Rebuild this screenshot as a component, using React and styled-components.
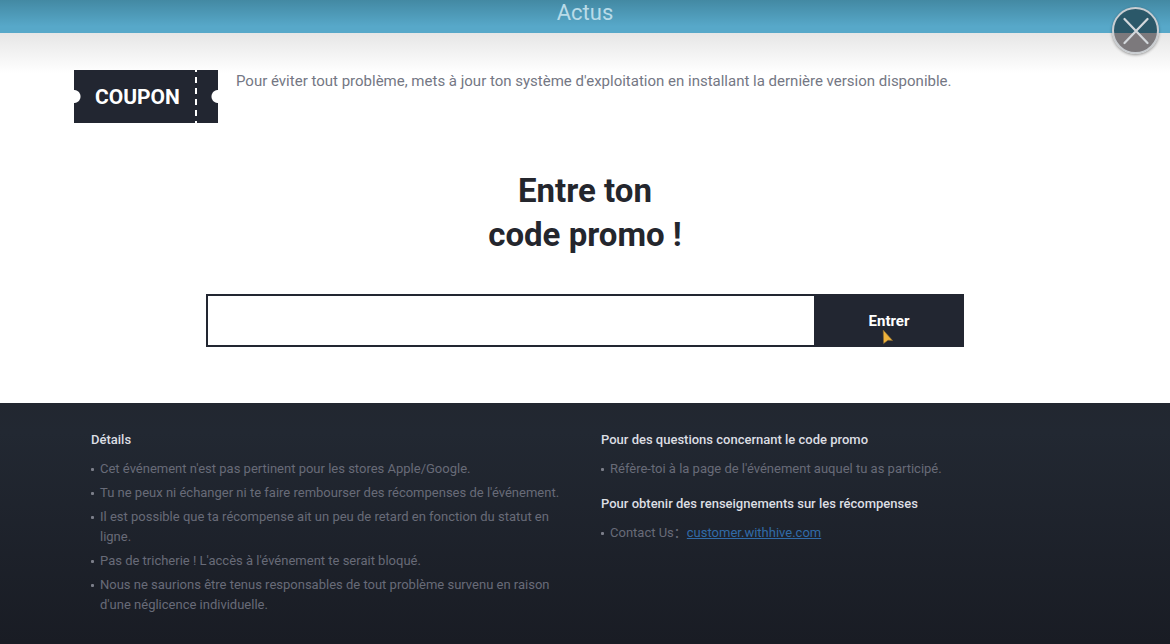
import styled, { createGlobalStyle } from "styled-components";

const details = [
    "Cet événement n'est pas pertinent pour les stores Apple/Google.",
    "Tu ne peux ni échanger ni te faire rembourser des récompenses de l'événement.",
    "Il est possible que ta récompense ait un peu de retard en fonction du statut en ligne.",
    "Pas de tricherie ! L'accès à l'événement te serait bloqué.",
    "Nous ne saurions être tenus responsables de tout problème survenu en raison d'une néglicence individuelle.",
];

export default function App() {

    return (
        <Page>
            <GlobalStyle />
            <TopBar>
                <Title>Actus</Title>
                <CloseButton type="button" aria-label="Fermer">
                    <svg width="26" height="28" viewBox="0 0 26 28" stroke="#d3d8dc" strokeWidth="2.2" strokeLinecap="round">
                        <path d="M1.5 2 L24.5 26 M24.5 2 L1.5 26" />
                    </svg>
                </CloseButton>
            </TopBar>
            <Main>
                <Intro>
                    <Ticket>
                        <TicketLabel>COUPON</TicketLabel>
                        <svg width="2" height="53" viewBox="0 0 2 53" stroke="#fff" strokeWidth="2">
                            <path d="M1 0 V53" strokeDasharray="6 5" strokeDashoffset="4" />
                        </svg>
                    </Ticket>
                    <p>Pour éviter tout problème, mets à jour ton système d'exploitation en installant la dernière version disponible.</p>
                </Intro>
                <Heading>Entre ton<br />code promo !</Heading>
                <CodeForm onSubmit={(e) => e.preventDefault()}>
                    <CodeInput type="text" aria-label="Code promo" />
                    <SubmitButton type="submit">
                        Entrer
                        <Pointer width="12" height="16" viewBox="0 0 12 16" aria-hidden="true">
                            <path d="M1.2 1 L10.6 11.6 L6 11.2 L1.6 14.6 Z" fill="#eeb23c" stroke="#8a6a30" strokeWidth="0.6" />
                        </Pointer>
                    </SubmitButton>
                </CodeForm>
            </Main>
            <Footer>
                <section>
                    <FooterTitle>Détails</FooterTitle>
                    <List>
                        {details.map((text) => <li key={text}>{text}</li>)}
                    </List>
                </section>
                <section>
                    <FooterTitle>Pour des questions concernant le code promo</FooterTitle>
                    <List>
                        <li>Réfère-toi à la page de l'événement auquel tu as participé.</li>
                    </List>
                    <FooterTitle>Pour obtenir des renseignements sur les récompenses</FooterTitle>
                    <List>
                        <li>Contact Us：<a href="https://customer.withhive.com">customer.withhive.com</a></li>
                    </List>
                </section>
            </Footer>
        </Page>
    )
}

const GlobalStyle = createGlobalStyle`
    * {
        box-sizing: border-box;
    }
    body {
        margin: 0;
        background: #fff;
        font-family: Roboto, "Noto Sans CJK SC", sans-serif;
    }
    h1, h2, h3, p, ul {
        margin: 0;
        padding: 0;
    }
`;

const Page = styled.div`
    min-height: 100vh;
    display: flex;
    flex-direction: column;
`;

const TopBar = styled.header`
    position: relative;
    height: 33px;
    display: flex;
    justify-content: center;
    background: linear-gradient(#4389a3, #57a8c9 80%);
`;

const Title = styled.h1`
    font-size: 22px;
    font-weight: 400;
    line-height: 26px;
    color: #b9dbe8;
`;

const CloseButton = styled.button`
    position: absolute;
    top: 7px;
    right: 11px;
    width: 47px;
    height: 47px;
    display: flex;
    align-items: center;
    justify-content: center;
    padding: 0;
    border: 2px solid #c9cdd1;
    border-radius: 50%;
    background: linear-gradient(#2b5869 24px, #7c797c 24px);
    box-shadow: 0 1px 3px rgba(0, 0, 0, 0.4);
    cursor: pointer;
`;

const Main = styled.main`
    padding: 37px 74px 56px;
    background: linear-gradient(#e6e6e6, #fff 40px);
`;

const Intro = styled.div`
    display: flex;
    gap: 18px;
    font-size: 15px;
    line-height: 22px;
    color: #747784;
`;

const Ticket = styled.div`
    flex: none;
    width: 144px;
    height: 53px;
    display: flex;
    align-items: center;
    justify-content: space-between;
    padding: 0 21px;
    background: radial-gradient(circle at 0 50%, #fff 6px, transparent 7px),
        radial-gradient(circle at 100% 50%, #fff 6px, transparent 7px),
        #222631;
`;

const TicketLabel = styled.strong`
    font-size: 21px;
    font-weight: 700;
    color: #fff;
`;

const Heading = styled.h2`
    margin-top: 46px;
    font-size: 33px;
    font-weight: 700;
    line-height: 44px;
    text-align: center;
    color: #24262d;
`;

const CodeForm = styled.form`
    display: flex;
    height: 53px;
    margin: 37px 132px 0;
`;

const CodeInput = styled.input`
    flex: 1;
    min-width: 0;
    padding: 0 16px;
    border: 2px solid #222631;
    border-right: 0;
    border-radius: 0;
    outline: 0;
    background: #fff;
    font: 16px Roboto, sans-serif;
`;

const SubmitButton = styled.button`
    position: relative;
    width: 150px;
    padding: 0;
    border: 0;
    background: #222631;
    color: #fff;
    font: 700 15px Roboto, sans-serif;
    cursor: pointer;
`;

const Pointer = styled.svg`
    position: absolute;
    left: 68px;
    top: 35px;
`;

const Footer = styled.footer`
    flex: 1;
    display: grid;
    grid-template-columns: 1fr 1fr;
    gap: 32px;
    padding: 27px 91px;
    background: linear-gradient(#222730, #222832 12%, #191c24);
    font-size: 13px;
    line-height: 20px;
`;

const FooterTitle = styled.h3`
    font-size: 13px;
    font-weight: 500;
    color: #dcdee3;

    ul + & {
        margin-top: 15px;
    }
`;

const List = styled.ul`
    display: grid;
    gap: 4px;
    margin-top: 9px;
    list-style: none;
    color: #686b78;

    & li {
        position: relative;
        padding-left: 9px;
    }
    & li::before {
        content: "";
        position: absolute;
        left: 0;
        top: 9px;
        width: 3px;
        height: 3px;
        border-radius: 1px;
        background: #7b7e89;
    }
    & a {
        color: #316ba8;
    }
`;
